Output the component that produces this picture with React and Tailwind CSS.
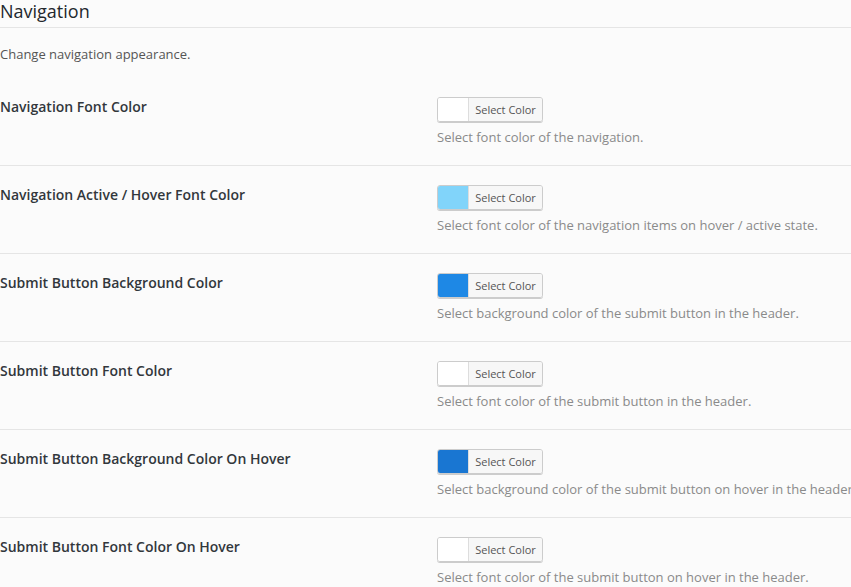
import React from "react";

const rows = [
  { label: "Navigation Font Color", color: "#ffffff", desc: "Select font color of the navigation." },
  { label: "Navigation Active / Hover Font Color", color: "#81d4fa", desc: "Select font color of the navigation items on hover / active state." },
  { label: "Submit Button Background Color", color: "#1e88e5", desc: "Select background color of the submit button in the header." },
  { label: "Submit Button Font Color", color: "#ffffff", desc: "Select font color of the submit button in the header." },
  { label: "Submit Button Background Color On Hover", color: "#1976d2", desc: "Select background color of the submit button on hover in the header." },
  { label: "Submit Button Font Color On Hover", color: "#ffffff", desc: "Select font color of the submit button on hover in the header." },
];

export default function App() {
  return (
    <div className="w-[851px] h-[587px] overflow-hidden bg-[#fbfbfb] font-['Open_Sans',sans-serif] text-[#23282d]">
      <h2 className="h-[28px] border-b border-[#e5e5e5] text-[18px] leading-[22px] font-medium">Navigation</h2>
      <p className="mt-[16px] text-[13px] leading-[20px] text-[#555]">Change navigation appearance.</p>
      <div className="mt-[14px]">
        {rows.map((r, i) => (
          <div key={i} className="flex h-[88px] border-b border-[#e5e5e5] pt-[19px]">
            <div className="w-[437px] shrink-0 text-[14px] leading-[20px] font-semibold text-[#32373c]">{r.label}</div>
            <div className="whitespace-nowrap">
              <div className="flex h-[25px] w-[106px] rounded-[3px] border border-[#cccccc] overflow-hidden shadow-[0_1px_0_#ccc]">
                <div className="w-[31px] border-r border-[#dddddd]" style={{ background: r.color }} />
                <div className="flex-1 bg-[#f7f7f7] text-[11px] leading-[23px] text-[#555] text-center">Select Color</div>
              </div>
              <div className="mt-[5px] text-[13px] leading-[20px] text-[#8a8a8a]">{r.desc}</div>
            </div>
          </div>
        ))}
      </div>
    </div>
  );
}
